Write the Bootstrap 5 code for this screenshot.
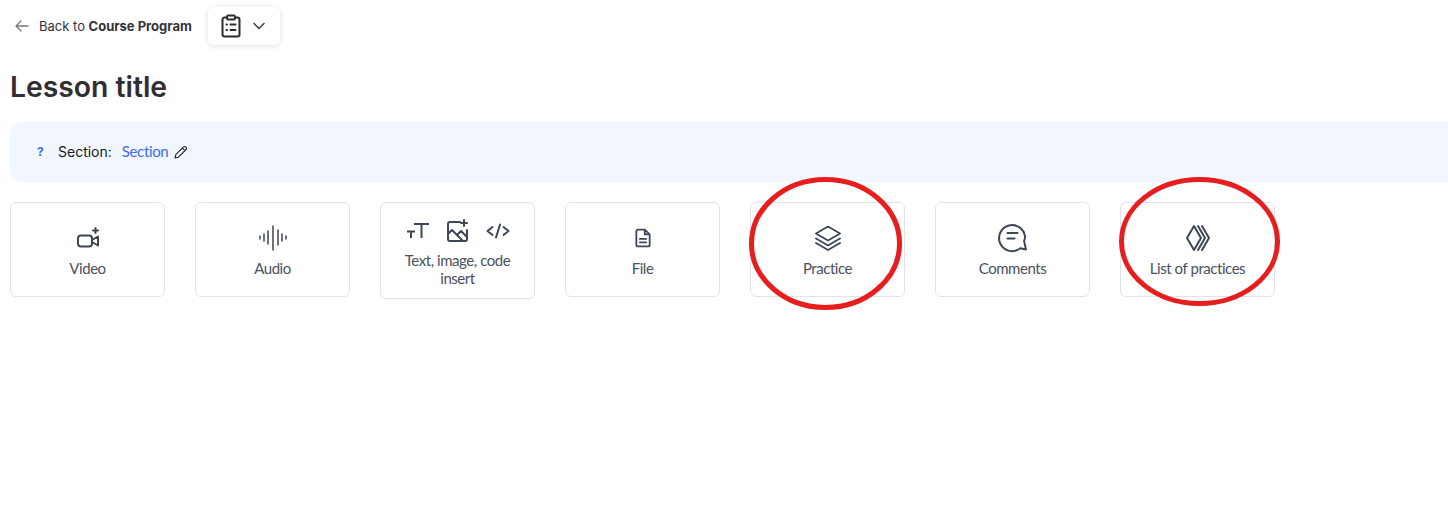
<!DOCTYPE html>
<html lang="en">
<head>
    <meta charset="UTF-8">
    <meta name="viewport" content="width=device-width, initial-scale=1.0">
    <title>Lesson title</title>
    <link href="https://cdn.jsdelivr.net/npm/bootstrap@5.3.0/dist/css/bootstrap.min.css" rel="stylesheet">
    <style>
        body {
            font-family: Inter, sans-serif;
            background: #fff;
            overflow: hidden;
        }
        .lesson-page {
            position: relative;
            height: 508px;
            padding: 7px 0 0 10px;
        }
        .back-row {
            height: 38px;
            padding-left: 5px;
        }
        .back-link {
            font-size: 13px;
            color: #33333b;
            text-decoration: none;
            margin-right: 16px;
        }
        .back-link svg {
            margin-right: 10px;
        }
        .back-link span {
            padding-top: 2px;
        }
        .back-link b {
            font-weight: 700;
        }
        .outline-btn {
            width: 72px;
            height: 38px;
            padding-right: 2px;
            background: #fff;
            border-radius: 6px;
            box-shadow: 0 1px 6px rgba(30, 40, 70, .14);
            gap: 12px;
        }
        .lesson-heading {
            font-family: Inter, sans-serif;
            font-size: 28.3px;
            line-height: 34px;
            font-weight: 600;
            color: #2e2e33;
            margin: 25px 0 18px;
        }
        .section-bar {
            height: 60px;
            background: #f1f6ff;
            border-radius: 10px 0 0 10px;
            padding: 0 0 1px 27px;
            font-size: 14px;
            color: #17171c;
        }
        .section-q {
            color: #3f6bf0;
            font-weight: 700;
            font-size: 12px;
            width: 21px;
        }
        .section-link {
            font-family: Lato, sans-serif;
            font-size: 15px;
            letter-spacing: -.35px;
            color: #3f6bf0;
            text-decoration: none;
            margin: 0 6px 0 10px;
        }
        .tile-row {
            margin-top: 20px;
            gap: 30px;
        }
        .add-tile {
            width: 155px;
            height: 95px;
            background: #fff;
            border: 1px solid #e2e2ee;
            border-radius: 6px;
            font-family: Lato, sans-serif;
            font-size: 15px;
            letter-spacing: -.45px;
            line-height: 18px;
            color: #4a5261;
            text-align: center;
            padding-top: 21px;
        }
        .add-tile.tall {
            height: 97px;
            padding-top: 14px;
        }
        .tile-icon {
            height: 28px;
            margin-bottom: 7px;
        }
        .tall .tile-icon {
            margin-bottom: 6px;
            gap: 16px;
        }
        .add-tile svg {
            fill: none;
            stroke: #3d4656;
            stroke-width: 2;
            stroke-linecap: round;
            stroke-linejoin: round;
        }
        .oval-mark {
            position: absolute;
            left: 0;
            top: 0;
            pointer-events: none;
        }
    </style>
</head>
<body>
    <div class="lesson-page">
        <div class="back-row d-flex align-items-center">
            <a class="back-link d-flex align-items-center" href="#">
                <svg width="14" height="12" viewBox="0 0 14 12" fill="none" stroke="#77777f" stroke-width="1.3" stroke-linecap="round" stroke-linejoin="round"><path d="M13 6H1M6 1 1 6l5 5"/></svg>
                <span>Back to <b>Course Program</b></span>
            </a>
            <div class="outline-btn d-flex align-items-center justify-content-center">
                <svg width="20" height="24" viewBox="0 0 20 24" fill="none" stroke="#2b2b30" stroke-width="2" stroke-linecap="round" stroke-linejoin="round"><path d="M6 3.500H3.500A2 2 0 0 0 1.500 5.500v15a2 2 0 0 0 2 2h13a2 2 0 0 0 2-2v-15a2 2 0 0 0-2-2H14"/><rect x="6" y="1.500" width="8" height="4" rx="1.200"/><path d="M5.500 10.500h.5M9.500 10.500h5M5.500 16h.5M9.500 16h5"/></svg>
                <svg width="12" height="8" viewBox="0 0 12 8" fill="none" stroke="#3a3a40" stroke-width="1.500" stroke-linecap="round" stroke-linejoin="round"><path d="M1 1.500 6 6.500l5-5"/></svg>
            </div>
        </div>

        <h1 class="lesson-heading">Lesson title</h1>

        <div class="section-bar d-flex align-items-center">
            <span class="section-q">?</span>
            <span>Section:</span>
            <a class="section-link" href="#">Section</a>
            <svg width="14" height="14" viewBox="0 0 14 14" fill="none" stroke="#26262b" stroke-width="1.100" stroke-linejoin="round"><path d="M1 13l.8-3.400 7.700-7.700a1.400 1.400 0 0 1 2 0l.6.6a1.400 1.400 0 0 1 0 2l-7.700 7.700zM8.300 3.100l2.600 2.600"/></svg>
        </div>

        <div class="tile-row d-flex align-items-start">
            <div class="add-tile">
                <div class="tile-icon d-flex justify-content-center align-items-center">
                    <svg width="26" height="26" viewBox="0 0 26 26"><rect x="3" y="10.500" width="14" height="11" rx="3"/><path d="M17 15l6-3.500v9L17 17M20.500 3v5M18 5.500h5"/></svg>
                </div>
                <div>Video</div>
            </div>
            <div class="add-tile">
                <div class="tile-icon d-flex justify-content-center align-items-center">
                    <svg width="30" height="26" viewBox="0 0 30 26"><path stroke-width="1.500" d="M2 11v3M6 9v7M10 6v13M15 1v24M20 5v15M24 9v7M28 11v3"/></svg>
                </div>
                <div>Audio</div>
            </div>
            <div class="add-tile tall">
                <div class="tile-icon d-flex justify-content-center align-items-center">
                    <svg width="24" height="18" viewBox="0 0 24 18" stroke-width="2.400"><path d="M8 2h15M15.500 2v14M1 9.500h8M5 9.500V16" stroke-linecap="butt"/></svg>
                    <svg width="24" height="24" viewBox="0 0 24 24" stroke-width="2.300"><path d="M14 3H4a2 2 0 0 0-2 2v15a2 2 0 0 0 2 2h15a2 2 0 0 0 2-2v-9"/><path d="M2 15l4-4 10 10M12 15l3-3 6 6M18 1v6M15 4h6"/></svg>
                    <svg width="24" height="16" viewBox="0 0 24 16" stroke-width="2.300"><path d="M6.500 4 1.500 8l5 4M17.500 4l5 4-5 4M14 1.500 10 14.500"/></svg>
                </div>
                <div>Text, image, code<br>insert</div>
            </div>
            <div class="add-tile">
                <div class="tile-icon d-flex justify-content-center align-items-center">
                    <svg width="16" height="20" viewBox="0 0 18 22" stroke-width="1.700"><path d="M11 1.500H3.500a2 2 0 0 0-2 2v15a2 2 0 0 0 2 2h11a2 2 0 0 0 2-2V7zM11 1.500V7h5.500M5.500 12h7M5.500 16h7"/></svg>
                </div>
                <div>File</div>
            </div>
            <div class="add-tile">
                <div class="tile-icon d-flex justify-content-center align-items-center">
                    <svg width="28" height="26" viewBox="0 0 28 26"><path d="M14 1.500 26 8.500l-12 7L2 8.500zM2 13.500l12 7 12-7M2 18l12 7 12-7" stroke-width="1.800"/></svg>
                </div>
                <div>Practice</div>
            </div>
            <div class="add-tile">
                <div class="tile-icon d-flex justify-content-center align-items-center">
                    <svg width="30" height="30" viewBox="0 1.500 30 30"><path d="M28 28l-5.800-1.200A13 13 0 1 1 27 15a12.800 12.800 0 0 1-.9 4.600z"/><path d="M9.500 11.500h10M9.500 17h7"/></svg>
                </div>
                <div>Comments</div>
            </div>
            <div class="add-tile">
                <div class="tile-icon d-flex justify-content-center align-items-center">
                    <svg width="26" height="28" viewBox="0 0 26 28" stroke-width="1.800"><path d="M9 2 16 14 9 26 2 14zM13 2l7 12-7 12M17 2l7 12-7 12"/></svg>
                </div>
                <div>List of practices</div>
            </div>
        </div>

        <svg class="oval-mark" width="1448" height="508" fill="none" stroke="#e61e1e" stroke-width="5">
            <ellipse cx="825.500" cy="243.500" rx="74" ry="64"/>
            <ellipse cx="1199.500" cy="241.500" rx="78" ry="62"/>
        </svg>
    </div>
    <script src="https://cdn.jsdelivr.net/npm/bootstrap@5.3.0/dist/js/bootstrap.bundle.min.js"></script>
</body>
</html>
